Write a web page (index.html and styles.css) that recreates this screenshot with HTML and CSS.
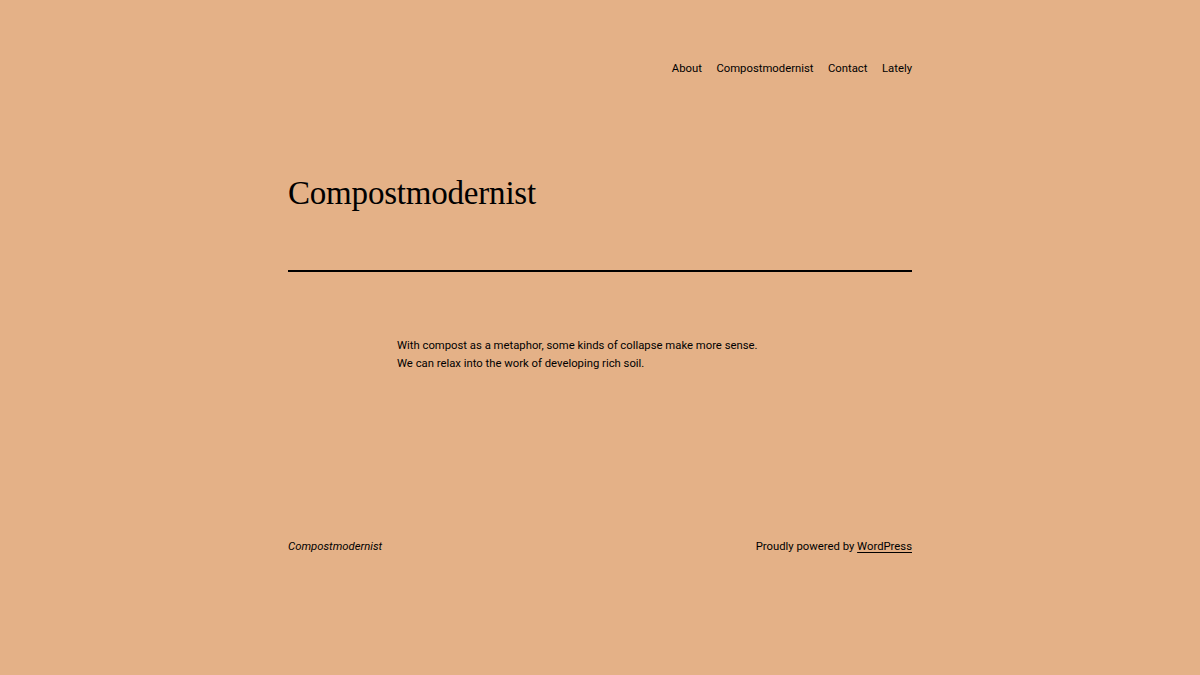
FILE: index.html
```html
<!DOCTYPE html>
<html lang="en">
<head>
<meta charset="utf-8">
<title>Compostmodernist</title>
<link rel="stylesheet" href="styles.css">
</head>
<body>
<div class="page">
  <header class="site-header">
    <nav class="nav">
      <a href="#">About</a>
      <a href="#">Compostmodernist</a>
      <a href="#">Contact</a>
      <a href="#">Lately</a>
    </nav>
  </header>
  <main class="main">
    <h1 class="title">Compostmodernist</h1>
    <hr class="sep">
    <div class="content">
      <p>With compost as a metaphor, some kinds of collapse make more sense.<br>We can relax into the work of developing rich soil.</p>
    </div>
  </main>
  <footer class="site-footer">
    <span class="footer-title">Compostmodernist</span>
    <span class="credit">Proudly powered by <a href="#">WordPress</a></span>
  </footer>
</div>
</body>
</html>
```
FILE: styles.css
```css
html, body {
  margin: 0;
  padding: 0;
}
body {
  background: #e4b187;
  color: #000;
  font-family: Roboto, "Liberation Sans", sans-serif;
  font-size: 11.3px;
  height: 675px;
  overflow: hidden;
}
a {
  color: #000;
  text-decoration: none;
}
.page {
  width: 624px;
  margin: 0 auto;
}
.site-header {
  display: flex;
  justify-content: flex-end;
  padding-top: 61px;
}
.nav {
  display: flex;
  gap: 14.5px;
  line-height: 16px;
}
.main {
  padding-top: 94px;
}
.title {
  font-family: "Liberation Serif", "Times New Roman", serif;
  font-weight: 400;
  font-size: 33px;
  letter-spacing: -0.2px;
  line-height: 44px;
  margin: 0;
}
.sep {
  border: 0;
  border-top: 2px solid #000;
  margin: 55px 0 0;
}
.content {
  width: 406px;
  margin: 0 auto;
  padding-top: 65px;
}
.content p {
  margin: 0;
  line-height: 18px;
}
.site-footer {
  display: flex;
  justify-content: space-between;
  margin-top: 166px;
  line-height: 16px;
}
.footer-title {
  font-style: italic;
}
.credit a {
  text-decoration: underline;
  text-underline-offset: 2px;
}
```
